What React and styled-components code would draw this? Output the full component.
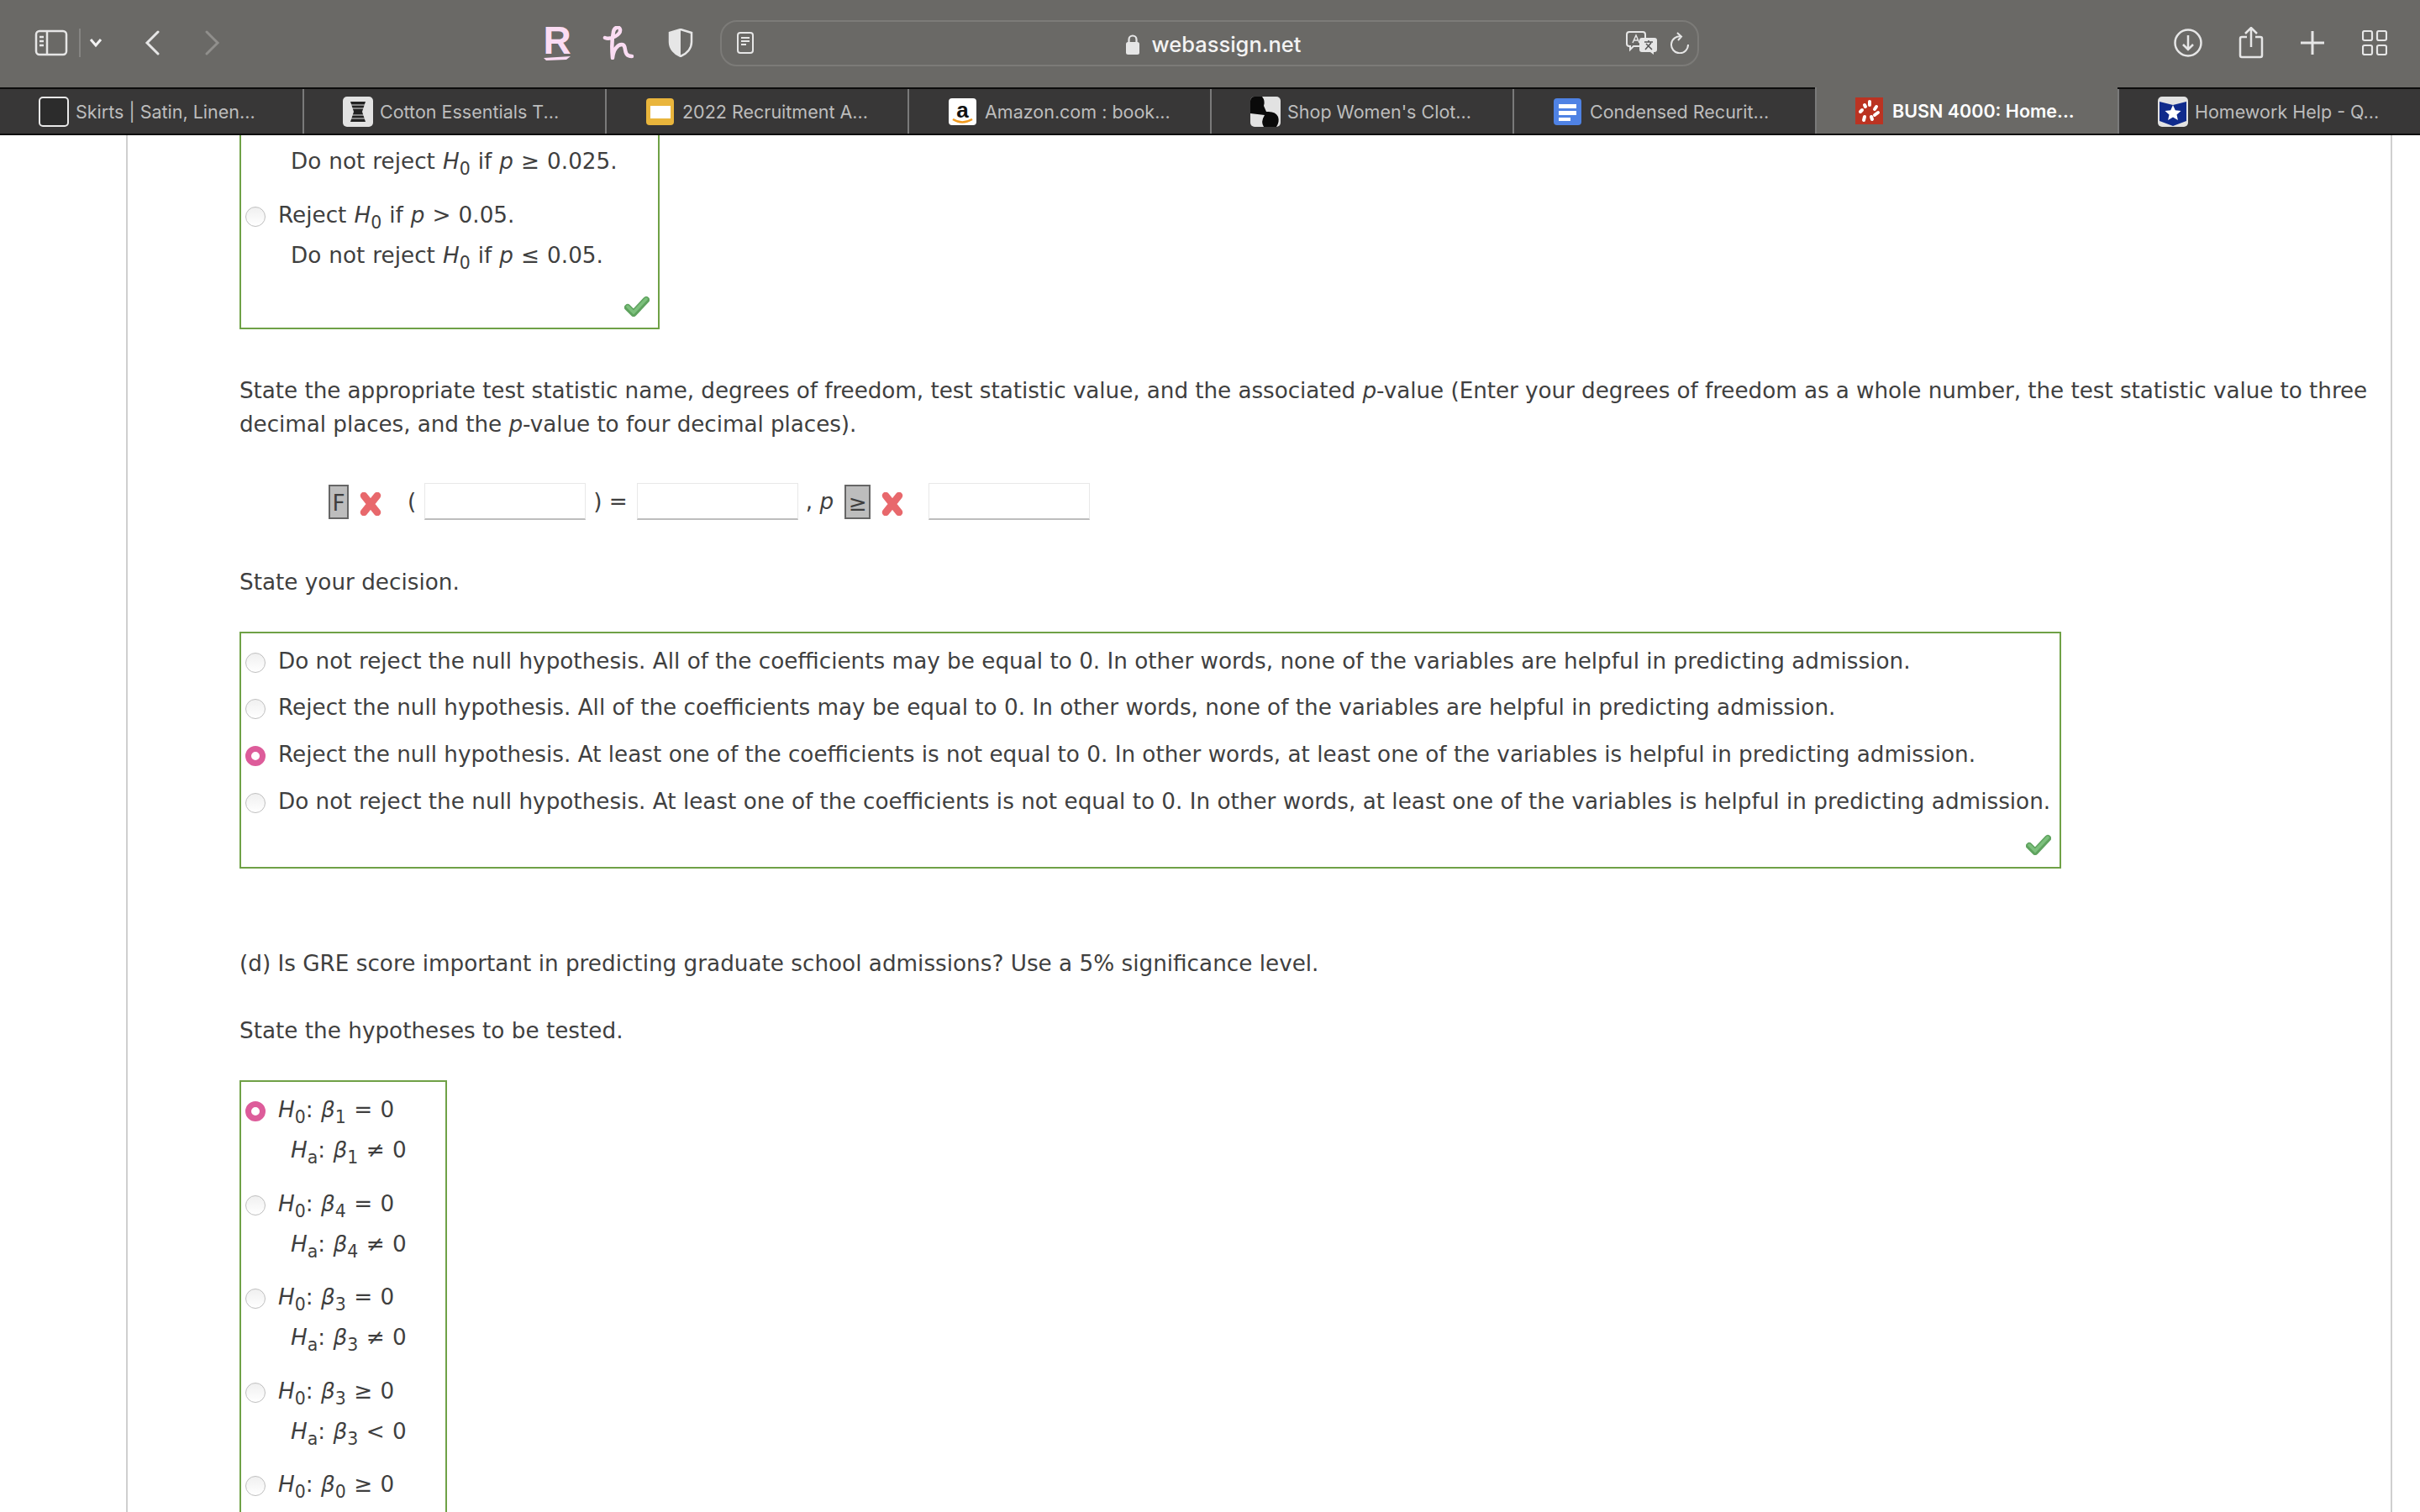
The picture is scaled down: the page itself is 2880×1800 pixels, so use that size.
import React from "react";
import styled, { createGlobalStyle } from "styled-components";

const Global = createGlobalStyle`
  html, body { margin: 0; padding: 0; background: #fff; }
  body { width: 2880px; height: 1800px; overflow: hidden; font-family: "DejaVu Sans", Verdana, sans-serif; }
`;
const Shell = styled.div`width: 2880px; height: 1800px; overflow: hidden; display: flex; flex-direction: column;`;
const Toolbar = styled.header`
  height: 104px; flex: none; background: #6a6966; display: flex; align-items: center; color: #eee;
  box-sizing: border-box; padding-bottom: 2px;
`;
const Slot = styled.div`
  flex: none; display: flex; align-items: center; justify-content: center;
  width: ${p => p.$w}px; margin-left: ${p => p.$ml || 0}px;
`;
const Logo = styled.span`
  display: flex; flex-direction: column; align-items: center;
  font-family: "Liberation Sans", sans-serif; font-weight: 700; font-size: 46px; line-height: 36px; color: #fbdcf3;
`;
const AddressBar = styled.div`
  flex: none; width: 1165px; height: 55px; margin-left: 32px; box-sizing: border-box;
  border: 2px solid #7c7b78; border-radius: 20px; display: flex; align-items: center; padding-left: 18px;
`;
const Address = styled.div`
  flex: 1; display: flex; align-items: center; justify-content: center; gap: 15px; padding: 3px 0 0 56px;
  font-family: Inter, sans-serif; font-weight: 500; font-size: 25.5px; color: #f3f3f3;
`;
const TabBar = styled.nav`
  height: 57px; flex: none; box-sizing: border-box; background: #383737;
  border-top: 2px solid #0c0c0c; border-bottom: 2px solid #0c0c0c; display: flex;
`;
const Tab = styled.div`
  flex: none; width: 360px; box-sizing: border-box; display: flex; align-items: center; gap: 8px; padding-left: 46px;
  border-left: 2px solid #7a7a7a; font-family: Inter, sans-serif; font-size: 21.5px; white-space: nowrap;
  color: ${p => p.$active ? "#fff" : "#bdbdbd"}; font-weight: ${p => p.$active ? 600 : 400};
  background: ${p => p.$active ? "#6a6966" : "transparent"};
  margin-top: ${p => p.$active ? "-2px" : 0};
  &:first-child { border-left: none; }
`;
const Favicon = styled.svg`flex: none; width: 36px; height: 36px;`;
const AmazonMark = styled.span`
  flex: none; width: 33px; height: 32px; margin: 0 2px 0 1px; box-sizing: border-box; background: #fff; border-radius: 4px;
  position: relative; display: block; text-align: center;
  font-family: "Liberation Sans", sans-serif; font-weight: 700; font-size: 26px; line-height: 28px; color: #111;
`;
const Smile = styled.svg`position: absolute; left: 4px; bottom: 1px; width: 25px; height: 7px;`;
const Page = styled.main`
  flex: 1; margin-left: 150px; width: 2697px; box-sizing: border-box; padding-left: 133px; overflow: hidden;
  border-left: 2px solid #cfcfcf; border-right: 2px solid #cfcfcf; background: #fff;
  font-size: 26.25px; line-height: 40px; color: #3f3f3f;
`;
const Para = styled.p`margin: ${p => p.$mt}px 0 0; white-space: nowrap; letter-spacing: ${p => p.$ls || 0}px;`;
const AnswerBox = styled.section`
  width: ${p => p.$w}px; margin-top: ${p => p.$mt || 0}px; box-sizing: border-box;
  border: 2px solid #6fa146; ${p => p.$open && "border-top: none;"}
  padding: ${p => p.$pt}px 0 ${p => p.$pb || 0}px 5px; display: flex; flex-direction: column;
`;
const Row = styled.div`
  display: flex; height: 48px; line-height: 50px; white-space: nowrap; margin-top: ${p => p.$mt || 0}px;
`;
const Indent = styled(Row)`padding-left: 54px;`;
const RadioDot = styled.span`
  flex: none; width: 24px; height: 24px; margin: 15px 15px 0 0; border-radius: 50%; box-sizing: border-box;
  ${p => p.$on
    ? "background: #fff; border: 7px solid #dd5c9a;"
    : "background: linear-gradient(#f0f0f0, #fff); border: 1px solid #bfbfbf;"}
`;
const Label = styled.span`display: block; word-spacing: ${p => p.$ws || 0}px;`;
const Math = styled.i`font-style: italic;`;
const Sub = styled.sub`font-size: 78%; line-height: 0; font-style: normal; vertical-align: -7px;`;
const Check = styled.svg`flex: none; width: 30px; height: 25px; align-self: flex-end; margin: ${p => p.$mt}px 10px 0 0;`;
const AnswerLine = styled.div`display: flex; align-items: center; height: 44px; margin-top: 50px; padding-left: 106px;`;
const Graded = styled.span`
  flex: none; height: 41px; line-height: 41px; box-sizing: border-box; background: #bdbdbd; border: 2px solid #666;
  width: ${p => p.$w}px; text-align: center;
`;
const Cross = styled.svg`flex: none; width: 28px; height: 28px; margin: 6px ${p => p.$mr}px 0 12px;`;
const Blank = styled.span`
  flex: none; width: 192px; height: 44px; box-sizing: border-box;
  border: 1px solid #e8e8e8; border-bottom: 2px solid #bdbdbd;
`;
const Sym = styled.span`flex: none; margin: 0 ${p => p.$mr || 0}px 0 ${p => p.$ml || 0}px;`;

const H = ({ s }) => <><Math>H</Math><Sub>{s}</Sub></>;
const B = ({ s }) => <><Math>β</Math><Sub>{s}</Sub></>;
const CheckIcon = ({ mt }) => (
  <Check $mt={mt} viewBox="0 0 30 25">
    <path d="M4 14 L11 21 L26 5" fill="none" stroke="#5fa35f" strokeWidth="8" strokeLinejoin="round" strokeLinecap="round" />
    <path d="M4 13 L11 20 L26 4" fill="none" stroke="#7cc07c" strokeWidth="3.500" strokeLinecap="round" />
  </Check>
);
const CrossIcon = ({ mr }) => (
  <Cross $mr={mr} viewBox="0 0 28 28"><path d="M6 4 L22 24 M22 4 L6 24" stroke="#e8686c" strokeWidth="8.500" strokeLinecap="round" /></Cross>
);

const decisions = [
  [false, "Do not reject the null hypothesis. All of the coefficients may be equal to 0. In other words, none of the variables are helpful in predicting admission.", 0],
  [false, "Reject the null hypothesis. All of the coefficients may be equal to 0. In other words, none of the variables are helpful in predicting admission.", 7],
  [true, "Reject the null hypothesis. At least one of the coefficients is not equal to 0. In other words, at least one of the variables is helpful in predicting admission.", 8],
  [false, "Do not reject the null hypothesis. At least one of the coefficients is not equal to 0. In other words, at least one of the variables is helpful in predicting admission.", 8],
];
const hypotheses = [
  [true, "1", "=", "1", "≠"], [false, "4", "=", "4", "≠"], [false, "3", "=", "3", "≠"], [false, "3", "≥", "3", "<"], [false, "0", "≥"],
];
const tabs = [
  ["Skirts | Satin, Linen...", <><rect x="1" y="1" width="34" height="34" rx="4" fill="#2c2c2c" stroke="#e8e8e8" strokeWidth="2" /></>],
  ["Cotton Essentials T...", <><rect width="36" height="36" rx="5" fill="#e2e2e2" /><path d="M9 6h18l-4 12 4 12H9l4-12z" fill="#222" /><path d="M8 10h20M8 14h20M8 22h20M8 26h20" stroke="#e2e2e2" /></>],
  ["2022 Recruitment A...", <><rect x="1" y="2" width="33" height="32" rx="4" fill="#e9b53c" /><rect x="6" y="11" width="24" height="15" fill="#fff" /></>],
  ["Amazon.com : book...", null],
  ["Shop Women's Clot...", <><rect width="36" height="36" rx="5" fill="#e2e2e2" /><path d="M0 5a5 5 0 0 1 5-5h9q4 5 2 11l3 7q11-1 14 6 2 6-2 12H16q-4-6 1-14L0 20z" fill="#0a0a0a" /></>],
  ["Condensed Recurit...", <><rect x="1" y="2" width="33" height="32" rx="4" fill="#4f82e4" /><path d="M7 9h21v5H7zM7 17h21v5H7zM7 25h14v4H7z" fill="#fff" /></>],
  ["BUSN 4000: Home...", <><rect x="0" y="2" width="33" height="32" fill="#bb3322" /><g stroke="#fff" strokeWidth="4" strokeLinecap="round"><path d="M17 7v4M25 13l-2 3M27 20l-4 3M19 25l1 3M11 25l-1 4M6 19l2-2M11 11l1 2" /></g></>],
  ["Homework Help - Q...", <><path d="M0 5a5 5 0 0 1 5-5h26a5 5 0 0 1 5 5v26a5 5 0 0 1-5 5H5a5 5 0 0 1-5-5z" fill="#e2e2e2" /><path d="M2 6l16 4 16-4v23l-16 6-16-6z" fill="#0f2a8c" /><path d="M18 10l2.800 6.200 6.700.7-5 4.500 1.400 6.600-5.900-3.400-5.900 3.400 1.400-6.600-5-4.500 6.700-.7z" fill="#fff" /></>],
];

export default function App() {
  return (
    <Shell>
      <Global />
      <Toolbar>
        <Slot $w={40} $ml={41}>
          <svg width="40" height="32" viewBox="0 0 40 32" fill="none" stroke="#e6e6e6" strokeWidth="2.500">
            <rect x="2" y="2" width="36" height="28" rx="4" /><path d="M15 2v28M6 9h5M6 14h5M6 19h5" />
          </svg>
        </Slot>
        <Slot $w={2} $ml={13}><svg width="2" height="34"><rect width="2" height="34" fill="#858482" /></svg></Slot>
        <Slot $w={16} $ml={10}>
          <svg width="16" height="12" viewBox="0 0 16 12" fill="none" stroke="#f2f2f2" strokeWidth="3"><path d="M2 2l6 7 6-7" /></svg>
        </Slot>
        <Slot $w={20} $ml={49}>
          <svg width="20" height="30" viewBox="0 0 20 30" fill="none" stroke="#e6e6e6" strokeWidth="3" strokeLinecap="round"><path d="M17 2L4 15l13 13" /></svg>
        </Slot>
        <Slot $w={20} $ml={52}>
          <svg width="20" height="30" viewBox="0 0 20 30" fill="none" stroke="#908f8c" strokeWidth="3" strokeLinecap="round"><path d="M3 2l13 13L3 28" /></svg>
        </Slot>
        <Slot $w={34} $ml={383}>
          <Logo>
            R
            <svg width="34" height="6" viewBox="0 0 34 6"><path d="M1 3l32-2-5 4-24 1z" fill="#fbdcf3" /></svg>
          </Logo>
        </Slot>
        <Slot $w={38} $ml={37}>
          <svg width="38" height="40" viewBox="0 0 38 40" fill="none" stroke="#fbdcf3" strokeWidth="4.500" strokeLinecap="round" strokeLinejoin="round">
            <path d="M3 14C10 17 22 10 21 4C20 0 14 1 13 7C11 16 11 27 12 38C13 28 18 22 23 22C30 22 23 36 35 36" />
          </svg>
        </Slot>
        <Slot $w={30} $ml={40}>
          <svg width="30" height="34" viewBox="0 0 30 34"><path d="M15 1l13 4v11c0 8-6 14-13 17C8 30 2 24 2 16V5z" fill="none" stroke="#e6e6e6" strokeWidth="2.500" /><path d="M15 1L2 5v11c0 8 6 14 13 17z" fill="#e6e6e6" /></svg>
        </Slot>
        <AddressBar>
          <svg width="20" height="26" viewBox="0 0 20 26" fill="none" stroke="#e6e6e6" strokeWidth="2"><rect x="1" y="1" width="18" height="24" rx="3" /><path d="M5 7h10M5 11h10M5 15h6" /></svg>
          <Address>
            <svg width="16" height="24" viewBox="0 0 16 24"><rect y="9" width="16" height="15" rx="2.500" fill="#e6e6e6" /><path d="M3.500 10V6a4.500 4.500 0 0 1 9 0v4" fill="none" stroke="#e6e6e6" strokeWidth="2.200" /></svg>
            <span>webassign.net</span>
          </Address>
          <svg width="38" height="28" viewBox="0 0 38 28" fill="none" stroke="#e6e6e6" strokeWidth="2">
            <path d="M4 1h16a3 3 0 0 1 3 3v11a3 3 0 0 1-3 3H9l-4 4v-4H4a3 3 0 0 1-3-3V4a3 3 0 0 1 3-3z" />
            <path d="M8 14l4-9 4 9M9.500 11h5" strokeWidth="1.500" />
            <path d="M19 8h15a3 3 0 0 1 3 3v11a3 3 0 0 1-3 3h-1v3l-4-3h-10a3 3 0 0 1-3-3V11a3 3 0 0 1 3-3z" fill="#e6e6e6" stroke="none" />
            <path d="M22 13h10M27 11v2M23 22l7-8M24 15l7 7" stroke="#555" strokeWidth="1.500" />
          </svg>
          <svg width="24" height="26" viewBox="0 0 24 26" fill="none" stroke="#e6e6e6" strokeWidth="2" style={{ margin: "0 9px 0 14px" }}>
            <path d="M14 5.500A10 10 0 1 0 22 15M9 1l5 4.500L10 10" />
          </svg>
        </AddressBar>
        <Slot $w={34} $ml={565}>
          <svg width="34" height="34" viewBox="0 0 34 34" fill="none" stroke="#e6e6e6" strokeWidth="2.500"><circle cx="17" cy="17" r="15.500" /><path d="M17 8v17M11 19l6 6 6-6" /></svg>
        </Slot>
        <Slot $w={30} $ml={43}>
          <svg width="30" height="38" viewBox="0 0 30 38" fill="none" stroke="#e6e6e6" strokeWidth="2.500"><path d="M10 12H4a2 2 0 0 0-2 2v20a2 2 0 0 0 2 2h22a2 2 0 0 0 2-2V14a2 2 0 0 0-2-2h-6M15 24V2M8 8l7-7 7 7" /></svg>
        </Slot>
        <Slot $w={28} $ml={44}>
          <svg width="28" height="28" viewBox="0 0 28 28" stroke="#e6e6e6" strokeWidth="3"><path d="M14 0v28M0 14h28" /></svg>
        </Slot>
        <Slot $w={30} $ml={45}>
          <svg width="30" height="30" viewBox="0 0 30 30" fill="none" stroke="#e6e6e6" strokeWidth="2.200"><rect x="1" y="1" width="11" height="11" rx="2" /><rect x="18" y="1" width="11" height="11" rx="2" /><rect x="1" y="18" width="11" height="11" rx="2" /><rect x="18" y="18" width="11" height="11" rx="2" /></svg>
        </Slot>
      </Toolbar>
      <TabBar>
        {tabs.map(([label, icon], i) => (
          <Tab key={label} $active={i === 6}>
            {icon
              ? <Favicon viewBox="0 0 36 36">{icon}</Favicon>
              : <AmazonMark>a<Smile viewBox="0 0 25 7"><path d="M1 1q11 7 23 0" stroke="#f09a1f" strokeWidth="2.500" fill="none" /></Smile></AmazonMark>}
            <span>{label}</span>
          </Tab>
        ))}
      </TabBar>
      <Page>
        <AnswerBox $w={500} $open $pt={6} $pb={13}>
          <Indent><Label $ws={0.7}>Do not reject <H s="0" /> if <Math>p</Math> ≥ 0.025.</Label></Indent>
          <Row $mt={16}><RadioDot /><Label $ws={0.7}>Reject <H s="0" /> if <Math>p</Math> &gt; 0.05.</Label></Row>
          <Indent><Label $ws={0.7}>Do not reject <H s="0" /> if <Math>p</Math> ≤ 0.05.</Label></Indent>
          <CheckIcon mt={25} />
        </AnswerBox>
        <Para $mt={53} $ls={-0.065}>State the appropriate test statistic name, degrees of freedom, test statistic value, and the associated <Math>p</Math>-value (Enter your degrees of freedom as a whole number, the test statistic value to three<br />decimal places, and the <Math>p</Math>-value to four decimal places).</Para>
        <AnswerLine>
          <Graded $w={24}>F</Graded><CrossIcon mr={30} />
          <Sym $mr={10}>(</Sym><Blank /><Sym $ml={9} $mr={11}>) =</Sym><Blank />
          <Sym $ml={9} $mr={13}>, <Math>p</Math></Sym><Graded $w={31}>≥</Graded><CrossIcon mr={29} /><Blank />
        </AnswerLine>
        <Para $mt={54}>State your decision.</Para>
        <AnswerBox $w={2168} $mt={39} $pt={8} $pb={14}>
          {decisions.map(([on, text, mt]) => <Row key={text} $mt={mt}><RadioDot $on={on} /><Label>{text}</Label></Row>)}
          <CheckIcon mt={16} />
        </AnswerBox>
        <Para $mt={93}>(d) Is GRE score important in predicting graduate school admissions? Use a 5% significance level.</Para>
        <Para $mt={40}>State the hypotheses to be tested.</Para>
        <AnswerBox $w={247} $mt={39} $pt={8} $pb={80}>
          {hypotheses.map(([on, a, op, b, op2], i) => (
            <div key={i}>
              <Row $mt={i ? 15.5 : 0}><RadioDot $on={on} /><Label $ws={1}><H s="0" />: <B s={a} /> {op} 0</Label></Row>
              {b && <Indent><Label $ws={1}><Math>H</Math><Sub>a</Sub>: <B s={b} /> {op2} 0</Label></Indent>}
            </div>
          ))}
        </AnswerBox>
      </Page>
    </Shell>
  );
}
